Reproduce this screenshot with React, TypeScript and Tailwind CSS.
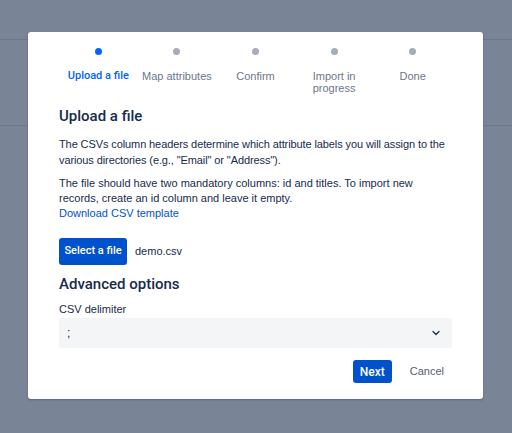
import { ChevronDown } from 'lucide-react'

const steps = ['Upload a file', 'Map attributes', 'Confirm', 'Import in progress', 'Done']

export default function App() {
  const current = 0

  return (
    <div className="relative h-[433px] w-[512px] overflow-hidden bg-[#7a8497] font-['Liberation_Sans',_Arial,_sans-serif]">
      {/* dimmed page behind the dialog */}
      <div className="h-[40px] border-b border-[#6e788b]" />
      <div className="h-[86px] border-b border-[#6e788b]" />

      <div className="absolute left-[28px] top-[32px] w-[455px] rounded-[3px] bg-white px-[31px] pb-[16px] pt-[16px] shadow-[0_1px_2px_rgba(9,30,66,0.3)]">
        {/* stepper */}
        <div className="flex justify-center">
          {steps.map((step, i) => (
            <div key={step} className="flex w-[80px] flex-col items-center">
              <span
                className={`h-[7px] w-[7px] rounded-full ${i === current ? 'bg-[#0065ff]' : 'bg-[#a5adba]'}`}
              />
              <span
                className={`mt-[15px] w-[70px] text-center text-[11px] leading-[12px] ${
                  i === current
                    ? "whitespace-nowrap font-['Roboto',_sans-serif] font-medium text-[#0065ff]"
                    : 'text-[#6b778c]'
                }`}
              >
                {step}
              </span>
            </div>
          ))}
        </div>

        <h2 className="mt-[12px] font-['Roboto',_sans-serif] text-[15px] font-medium leading-[20px] text-[#172b4d]">
          Upload a file
        </h2>
        <p className="mt-[10px] text-[11px] leading-[16px] tracking-[-0.1px] text-[#172b4d]">
          The CSVs column headers determine which attribute labels you will assign to the various
          directories (e.g., "Email" or "Address").
        </p>
        <p className="mt-[8px] text-[11px] leading-[15px] text-[#172b4d]">
          The file should have two mandatory columns: id and titles. To import new records, create an id
          column and leave it empty.
        </p>
        <a href="#" className="block text-[11px] leading-[14px] text-[#0052cc]">
          Download CSV template
        </a>

        <div className="mt-[18px] flex items-center gap-[8px]">
          <button className="h-[27px] w-[68px] rounded-[3px] bg-[#0052cc] font-['Roboto',_sans-serif] text-[11px] font-medium text-white">
            Select a file
          </button>
          <span className="text-[11px] text-[#172b4d]">demo.csv</span>
        </div>

        <h3 className="mt-[9px] font-['Roboto',_sans-serif] text-[15px] font-medium leading-[20px] text-[#172b4d]">
          Advanced options
        </h3>
        <label className="mt-[8px] block text-[11px] leading-[14px] text-[#172b4d]">CSV delimiter</label>
        <div className="mt-[2px] flex h-[30px] items-center justify-between rounded-[3px] bg-[#f4f5f7] px-[8px] text-[12px] text-[#172b4d]">
          <span>;</span>
          <ChevronDown size={12} strokeWidth={2.5} className="mr-[2px] text-[#172b4d]" />
        </div>

        <div className="mt-[12px] flex items-center justify-end pr-[8px]">
          <button className="h-[23px] w-[39px] rounded-[3px] bg-[#0052cc] font-['Roboto',_sans-serif] text-[12px] font-medium text-white">
            Next
          </button>
          <button className="ml-[18px] h-[23px] text-[11px] text-[#505f79]">Cancel</button>
        </div>
      </div>
    </div>
  )
}
